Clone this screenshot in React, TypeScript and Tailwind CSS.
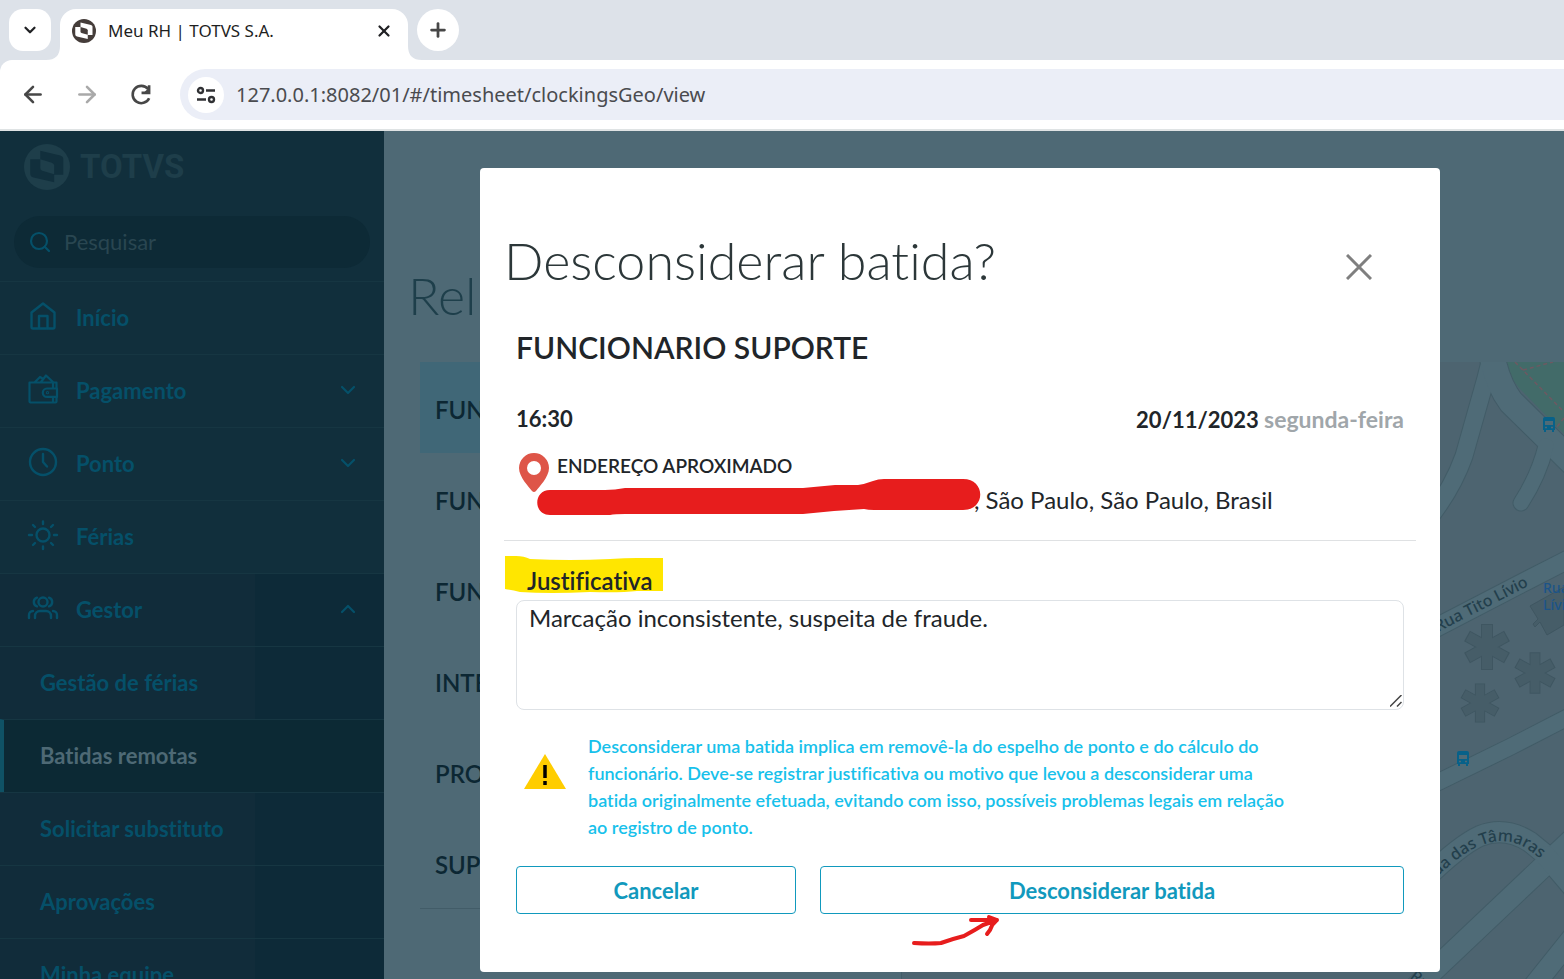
/**
 * Meu RH - Batidas remotas: modal de desconsiderar batida
 */
import { useState } from 'react';
import type { ReactNode } from 'react';
import { ArrowLeft, ArrowRight, ChevronDown, ChevronUp, Plus, Search, X } from 'lucide-react';

interface MenuItem {
    label: string;
    icon: ReactNode;
    arrow?: 'down' | 'up';
}

const iconProps = {
    viewBox: '0 0 32 32',
    fill: 'none',
    stroke: 'currentColor',
    strokeWidth: 2.4,
    strokeLinecap: 'round' as const,
    strokeLinejoin: 'round' as const,
    className: 'size-8 shrink-0',
};

const HomeIcon = () => (
    <svg {...iconProps}>
        <path d="M4.500 11.500 16 2.500l11.500 9V26a1.500 1.500 0 0 1-1.500 1.500H6A1.500 1.500 0 0 1 4.500 26Z" />
        <path d="M12 27V15h8.500v12" />
    </svg>
);

const WalletIcon = () => (
    <svg {...iconProps} strokeWidth={2.2}>
        <path d="M29.500 14V8.500H2.500v19a1 1 0 0 0 1 1h25a1 1 0 0 0 1-1V23M8 8l5-5 2.500 1.500M14 8l5-6.500L26 8" />
        <path d="M30 14.500H20a4.200 4.200 0 0 0 0 8.400h10ZM26 9v5M26 24v4" />
        <circle cx="20.500" cy="18.700" r="0.5" />
    </svg>
);

const ClockIcon = () => (
    <svg {...iconProps}>
        <circle cx="16" cy="15" r="13" />
        <path d="M16 7v8l4 4.500" />
    </svg>
);

const SunIcon = () => (
    <svg {...iconProps}>
        <circle cx="16" cy="15" r="6.5" />
        <path d="M16 1.500v2.500M16 26.500v2.500M2 15h3M27 15h3M6 5l2 2M24 23l2 2M26 5l-2 2M8 23l-2 2" />
    </svg>
);

const PeopleIcon = () => (
    <svg {...iconProps}>
        <circle cx="16" cy="9" r="4.500" />
        <path d="M8 25v-2a5 5 0 0 1 5-5h6a5 5 0 0 1 5 5v2M10 4.700a4.500 4.500 0 0 0 0 8.600M22 4.700a4.500 4.500 0 0 1 0 8.600M2 25v-3a4 4 0 0 1 4-4M30 25v-3a4 4 0 0 0-4-4" />
    </svg>
);

const menu: MenuItem[] = [
    { label: 'Início', icon: <HomeIcon /> },
    { label: 'Pagamento', icon: <WalletIcon />, arrow: 'down' },
    { label: 'Ponto', icon: <ClockIcon />, arrow: 'down' },
    { label: 'Férias', icon: <SunIcon /> },
    { label: 'Gestor', icon: <PeopleIcon />, arrow: 'up' },
];

const submenu = ['Gestão de férias', 'Batidas remotas', 'Solicitar substituto', 'Aprovações', 'Minha equipe'];

const employees = ['FUN', 'FUN', 'FUN', 'INTE', 'PRO', 'SUP'];

const TotvsMark = ({ className, hole }: { className: string; hole: string }) => (
    <svg viewBox="0 0 48 48" className={className}>
        <circle cx="24" cy="24" r="24" fill="currentColor" />
        <path d="M17 7L38 12Q41 13 41 15V32H31.500V40L10 35Q6.500 34 6.500 31V16H17Z" fill={hole} />
        <path d="M17 16L29 19.500Q31.500 20.500 31.500 22.500V31.500L19 28Q17 27 17 25Z" fill="currentColor" />
    </svg>
);

const BrowserBar = () => (
    <header className="shrink-0 bg-[#dde2e9] font-['Noto_Sans',sans-serif]">
        <div className="flex h-[60px]">
            <div className="flex w-[60px] items-center justify-center">
                <button aria-label="Pesquisar guias" className="flex size-[42px] items-center justify-center rounded-[14px] bg-white">
                    <ChevronDown className="size-[18px] text-[#202124]" strokeWidth={3} />
                </button>
            </div>
            <div className="relative mt-[9px] flex w-[348px] items-center rounded-t-2xl bg-white pr-[15px] pb-2 pl-3">
                {/* curvas na base da guia */}
                <svg viewBox="0 0 14 14" className="absolute bottom-0 -left-[14px] size-[14px]" fill="white">
                    <path d="M14 0V14H0Q14 14 14 0Z" />
                </svg>
                <svg viewBox="0 0 14 14" className="absolute -right-[14px] bottom-0 size-[14px]" fill="white">
                    <path d="M0 0V14H14Q0 14 0 0Z" />
                </svg>
                <TotvsMark className="size-6 text-[#453d3a]" hole="#ffffff" />
                <span className="ml-3 flex-1 text-[17px] text-[#1f1f1f]">Meu RH | TOTVS S.A.</span>
                <button aria-label="Fechar guia">
                    <X className="size-[18px] text-[#202124]" strokeWidth={3} />
                </button>
            </div>
            <button aria-label="Nova guia" className="mt-[9px] ml-[9px] flex size-[42px] items-center justify-center rounded-full bg-white">
                <Plus className="size-[22px] text-[#474747]" strokeWidth={3} />
            </button>
        </div>
        <div className="flex h-[71px] items-center rounded-tl-xl border-b-2 border-[#dfe3e4] bg-white pl-5">
            <button aria-label="Voltar" className="flex size-[26px] items-center justify-center text-[#474747]">
                <ArrowLeft className="size-[27px]" strokeWidth={2.4} />
            </button>
            <button aria-label="Avançar" className="ml-7 flex size-[26px] items-center justify-center text-[#a9a9a9]">
                <ArrowRight className="size-[27px]" strokeWidth={2.4} />
            </button>
            <button aria-label="Recarregar" className="ml-7 flex size-[26px] items-center justify-center text-[#474747]">
                <svg viewBox="0 0 24 24" className="size-[26px]" fill="none" stroke="currentColor" strokeWidth="2.400">
                    <path d="M18.500 6.500A8 8 0 1 0 19.500 15M19.500 3v7h-7" />
                    <path d="M19.500 5v5h-5Z" fill="currentColor" stroke="none" />
                </svg>
            </button>
            <div className="ml-[26px] flex h-[51px] flex-1 items-center rounded-l-full bg-[#ebeef7] pl-2">
                <button aria-label="Informações do site" className="flex size-9 items-center justify-center rounded-full bg-white">
                    <svg viewBox="0 0 20 18" className="h-[18px] w-5" fill="none" stroke="#303134" strokeWidth="2.400">
                        <circle cx="4.500" cy="4.500" r="2.500" />
                        <path d="M10 4.500h9M1 13.500h9" />
                        <circle cx="15.500" cy="13.500" r="2.500" />
                    </svg>
                </button>
                <input
                    aria-label="Endereço"
                    defaultValue="127.0.0.1:8082/01/#/timesheet/clockingsGeo/view"
                    className="ml-3 flex-1 bg-transparent text-[20px] text-[#4a4b4f] outline-none"
                />
            </div>
        </div>
    </header>
);

const Sidebar = () => (
    <aside className="w-96 shrink-0 overflow-hidden bg-[#112f3c] text-[22px] font-bold text-[#055069]">
        <div className="flex h-[85px] items-center gap-[10px] pb-[14px] pl-6 text-[#1e3e4a]">
            <TotvsMark className="size-[46px]" hole="#112f3c" />
            <span className="font-['Roboto',sans-serif] text-[33px]">TOTVS</span>
        </div>
        <div className="h-[65px] px-[14px]">
            <label className="flex h-[52px] items-center gap-3 rounded-full bg-[#0d2a36] pl-[14px]">
                <Search className="size-6 shrink-0" strokeWidth={2.2} />
                <input
                    type="text"
                    aria-label="Pesquisar"
                    placeholder="Pesquisar"
                    className="w-full bg-transparent pb-[2px] text-[22px] font-normal outline-none placeholder:text-[#294651]"
                />
            </label>
        </div>
        <nav>
            {menu.map((item) => (
                <a
                    key={item.label}
                    href="#"
                    className={`flex h-[73px] items-center border-t border-[#163642] pr-6 pb-[2px] pl-[27px] ${
                        item.arrow === 'up' ? 'bg-[linear-gradient(90deg,#112c3a_255px,#0d2a38_255px)]' : ''
                    }`}
                >
                    {item.icon}
                    <span className="ml-[17px] flex-1">{item.label}</span>
                    {item.arrow === 'down' && <ChevronDown className="size-6" strokeWidth={2.2} />}
                    {item.arrow === 'up' && <ChevronUp className="size-6" strokeWidth={2.2} />}
                </a>
            ))}
            {submenu.map((label) => (
                <a
                    key={label}
                    href="#"
                    className={`flex h-[73px] items-center border-t border-t-[#163642] pb-[2px] ${
                        label === 'Batidas remotas'
                            ? 'border-l-4 border-l-[#0f5265] bg-[#0c2934] pl-9 text-[#4e6975]'
                            : 'bg-[linear-gradient(90deg,#112c3a_255px,#0d2a38_255px)] pl-10'
                    }`}
                >
                    {label}
                </a>
            ))}
        </nav>
    </aside>
);

const roads = [
    { d: 'M1493 350 L1486 378 L1464 456 Q1452 490 1426 522', w: 17 },
    { d: 'M1491 350 Q1496 382 1511 402 L1575 465', w: 25 },
    { d: 'M1546 446 Q1539 475 1521 503', w: 15 },
    { d: 'M1420 636 L1530 579 L1575 556', w: 18 },
    { d: 'M1420 791 L1510 747 L1580 711', w: 16 },
    { d: 'M1425 879 Q1460 845 1480 836 Q1505 826 1530 842 L1552 860', w: 20 },
    { d: 'M1415 988 L1546 864 L1580 832', w: 21 },
    { d: 'M1546 856 L1580 896', w: 20 },
    { d: 'M1580 928 L1532 988', w: 20 },
];

const Building = ({ x, y, s }: { x: number; y: number; s: number }) => (
    <g transform={`translate(${x} ${y}) scale(${s})`}>
        <path d="M0-23V23M-20-11L20 11M-20 11L20-11" stroke="#3f5661" strokeWidth="12" />
        <path d="M0-22V22M-19-10.500L19 10.500M-19 10.500L19-10.500" stroke="#465d68" strokeWidth="10" />
    </g>
);

const Bus = ({ x, y }: { x: number; y: number }) => (
    <g transform={`translate(${x} ${y})`}>
        <path d="M2 0h8a2 2 0 0 1 2 2v11h-1v2H9v-2H3v2H1v-2H0V2a2 2 0 0 1 2-2Z" fill="#076189" />
        <path d="M3 1.500h6M2 4h8v4H2Z" fill="#4f6b77" />
        <path d="M2 10.500h2M8 10.500h2" stroke="#4f6b77" strokeWidth="1.500" />
    </g>
);

const StreetMap = () => (
    <svg
        viewBox="902 362 662 617"
        preserveAspectRatio="xMaxYMin slice"
        className="h-full w-full font-['Noto_Sans',sans-serif]"
        fill="none"
    >
        <path d="M902 362H1564V979H902Z" fill="#4d6470" />
        <path d="M1505 362Q1511 382 1526 395L1564 434V362Z" fill="#426b69" />
        {roads.map((r) => (
            <path key={r.d} d={r.d} stroke="#425c67" strokeWidth={r.w + 2} strokeLinecap="round" />
        ))}
        {roads.map((r) => (
            <path key={r.d} d={r.d} stroke="#4f6b77" strokeWidth={r.w} strokeLinecap="round" />
        ))}
        <path d="M1515 362L1564 412M1523 370L1553 362M1564 418L1556 428" stroke="#6d5962" strokeWidth="1.500" strokeDasharray="4 3" />
        <Building x={1487} y={647} s={1} />
        <Building x={1535} y={673} s={0.9} />
        <Building x={1480} y={703} s={0.85} />
        <path d="M1530 606L1564 587V625L1547 635L1540 622L1535 627L1533 624L1538 619Z" fill="#465d68" stroke="#3f5661" />
        <Bus x={1543} y={417} />
        <Bus x={1457} y={751} />
        <path id="tamaras" d="M1430 884 Q1460 853 1482 845 Q1505 836 1526 848 L1570 880" />
        <g fill="#233f4c" fontSize="16" fontWeight="500">
            <text transform="translate(1438 632) rotate(-27)">Rua Tito Lívio</text>
            <text>
                <textPath href="#tamaras">Rua das Tâmaras</textPath>
            </text>
            <text transform="translate(1409 978) rotate(38)">Ru</text>
        </g>
        <g fill="#1c5488" fontSize="14" fontWeight="500">
            <text x="1543" y="593">Rua</text>
            <text x="1543" y="610">Lívio</text>
        </g>
    </svg>
);

const Background = () => (
    <main className="flex min-w-0 flex-1 flex-col bg-[#4e6975] text-[#0c2733]">
        <h1 className="pt-[130px] pl-6 text-[52px] leading-[68px] font-light text-[#1e3f4b]">Rel</h1>
        <div className="mt-[33px] flex min-h-0 flex-1 pl-9">
            <div className="w-[481px] shrink-0">
                <ul className="border-b border-[#425c68]">
                    {employees.map((name, i) => (
                        <li
                            key={i}
                            className={`flex h-[91px] items-center pt-1 pl-[15px] text-[24px] font-semibold ${i === 0 ? 'bg-[#406777]' : ''}`}
                        >
                            {name}
                        </li>
                    ))}
                </ul>
            </div>
            <div className="min-w-0 flex-1 border-l border-[#425c68]">
                <StreetMap />
            </div>
        </div>
    </main>
);

const ClockingModal = () => {
    const [reason, setReason] = useState('Marcação inconsistente, suspeita de fraude.');

    return (
        <div role="dialog" aria-labelledby="modal-title" className="w-full rounded bg-white px-6 pt-[58px] pb-[58px] text-[#212529]">
            <div className="flex h-[78px] items-start justify-between pr-11">
                <h2 id="modal-title" className="text-[52px] leading-[68px] font-light text-[#2c3739]">
                    Desconsiderar batida?
                </h2>
                <button aria-label="Fechar" className="mt-7 text-[#7f7f7f]">
                    <svg viewBox="0 0 26 26" className="size-[26px]" stroke="currentColor" strokeWidth="3">
                        <path d="M1 1l24 24M25 1L1 25" />
                    </svg>
                </button>
            </div>

            <div className="border-b border-[#dfe1e3] px-3 pb-[22px]">
                <h3 className="pt-5 text-[30px] leading-[46px] font-semibold">FUNCIONARIO SUPORTE</h3>
                <div className="mt-[31px] flex justify-between text-[22px] leading-9 font-bold">
                    <span>16:30</span>
                    <span>
                        20/11/2023 <span className="text-[23px] text-[#a0a6aa]">segunda-feira</span>
                    </span>
                </div>
                <div className="relative mt-3 pl-[41px]">
                    <svg viewBox="0 0 30 39" className="absolute top-[3px] left-[3px] h-[39px] w-[30px]">
                        <path d="M15 0a15 15 0 0 1 15 15c0 9-10 19-13 23q-2 2-4 0C10 34 0 24 0 15A15 15 0 0 1 15 0Z" fill="#de5548" />
                        <circle cx="15" cy="15" r="7" fill="white" />
                    </svg>
                    <p className="text-[19px] leading-8 font-semibold">ENDEREÇO APROXIMADO</p>
                    <p className="pl-[417px] text-[24px] leading-9">, São Paulo, São Paulo, Brasil</p>
                    {/* tarja sobre o endereço */}
                    <svg viewBox="537 479 444 37" className="absolute top-[29px] left-[21px] h-[37px] w-[444px]">
                        <path
                            d="M550 490H605Q615 490 625 488H803L835 485H858Q865 484 873 481Q878 479 884 479H963C986 479 986 510 963 510H874Q868 510 864 509L834 511L803 514H625Q615 514 610 515H550C533 515 533 490 550 490Z"
                            fill="#e71d1d"
                        />
                    </svg>
                </div>
            </div>

            <div className="relative px-3 pt-6">
                <svg viewBox="505 556 158 37" className="absolute top-[15px] left-[1px] h-[37px] w-[158px]">
                    <path d="M505 556H516Q524 556 530 559Q570 561 610 559Q625 558 637 558H663V591H637Q620 593 590 592Q550 594 520 592Q512 590 505 589Z" fill="#ffe600" />
                </svg>
                <label htmlFor="reason" className="relative block pb-1 pl-[11px] text-[24px] leading-[31px] font-semibold">
                    Justificativa
                </label>
                <textarea
                    id="reason"
                    value={reason}
                    onChange={(e) => setReason(e.target.value)}
                    className="block h-[110px] w-full resize-none rounded-lg border border-[#dee2e6] px-3 text-[24px] leading-[34px] outline-none"
                />
                <svg viewBox="0 0 12 12" className="pointer-events-none absolute right-[14px] bottom-[3px] size-3" stroke="#444444" strokeWidth="1.500">
                    <path d="M0 11.500L11.500 0M7 11.500L11.500 7" />
                </svg>
            </div>

            <div className="mt-[23px] flex items-start gap-[21px] px-[19px]">
                <svg viewBox="0 0 44 36" className="mt-[21px] h-9 w-11 shrink-0">
                    <path d="M22 0L43 35H1Z" fill="#ffcd00" />
                    <path d="M22 11V24M22 27V31" stroke="black" strokeWidth="3.500" />
                </svg>
                <p className="max-w-[720px] text-[18px] leading-[27px] font-semibold text-[#17c1eb]">
                    Desconsiderar uma batida implica em removê-la do espelho de ponto e do cálculo do
                    <br />
                    funcionário. Deve-se registrar justificativa ou motivo que levou a desconsiderar uma
                    <br />
                    batida originalmente efetuada, evitando com isso, possíveis problemas legais em relação
                    <br />
                    ao registro de ponto.
                </p>
            </div>

            <div className="relative mt-[25px] flex gap-6 px-3 text-[22px] font-bold text-[#1199bd]">
                <button className="h-12 w-[280px] rounded border border-[#1199bd]">Cancelar</button>
                <button className="h-12 flex-1 rounded border border-[#1199bd]">Desconsiderar batida</button>
                <svg viewBox="910 912 90 36" className="absolute top-[46px] left-[406px] h-9 w-[90px]" fill="none" stroke="#e71d1d" strokeWidth="4" strokeLinecap="round" strokeLinejoin="round">
                    <path d="M914 943Q930 944 941 943Q952 939 964 936Q975 930 983 925L997 920M971 920H997M989 917L997 920Q992 924 990 930L987 934" />
                </svg>
            </div>
        </div>
    );
};

export default function App() {
    return (
        <div className="flex h-screen flex-col overflow-hidden font-['Lato',sans-serif] [font-variant-ligatures:none]">
            <BrowserBar />
            <div className="relative flex min-h-0 flex-1">
                <Sidebar />
                <Background />
                <div className="absolute inset-0 flex items-start pt-[37px] pr-[124px] pl-[480px]">
                    <ClockingModal />
                </div>
            </div>
        </div>
    );
}
